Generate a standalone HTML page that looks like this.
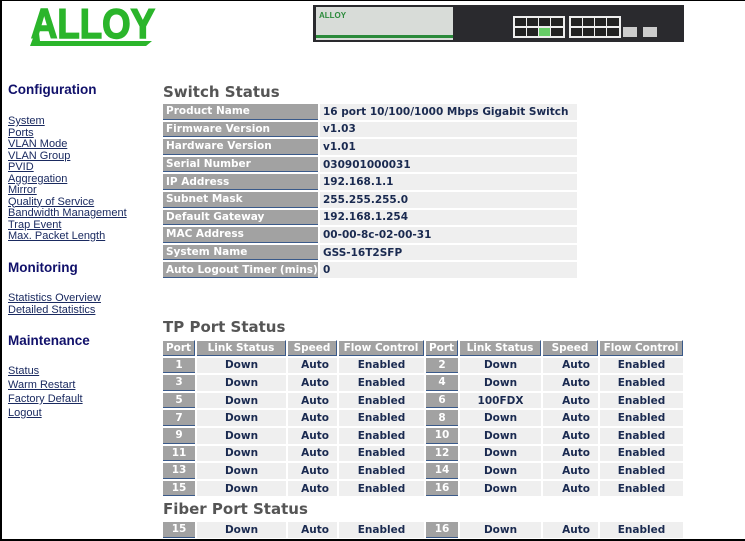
<!DOCTYPE html>
<html><head><meta charset="utf-8"><style>
body{margin:0;width:745px;height:541px;overflow:hidden;background:#fff;font-family:"DejaVu Sans",Verdana,sans-serif;}
.frame{position:absolute;left:0;top:0;width:743px;height:538px;border:1px solid #000;border-width:1px 1px 2px 2px;}
.nav{position:absolute;left:8px;font-family:"Liberation Sans",Arial,sans-serif;}
.nav h3{margin:0;font-size:13.5px;color:#10106a;font-weight:bold;position:absolute;white-space:nowrap}
.nav a{position:absolute;font-size:11px;color:#1a2a60;text-decoration:underline;white-space:nowrap;line-height:11.5px}
.ttl{position:absolute;left:163px;font-size:15px;font-weight:bold;color:#555;white-space:nowrap}
table{position:absolute;border-collapse:separate;border-spacing:2px;font-size:10.5px;}
td{padding:0 0 0 3px;height:15.6px;white-space:nowrap;color:#1a2a50;font-weight:bold;background:#efefef;}
td.l{background:#a2a2a2;color:#fff;border-bottom:1px solid #3a5a8a;height:14.6px}
.tp{table-layout:fixed;width:524px}
.tp td{text-align:center;padding:0;overflow:hidden}
.tp td.h{background:#a2a2a2;color:#fff;border-bottom:1px solid #3a5a8a;border-right:1px solid #3a5a8a;height:13.6px;border-top:1px solid #fff;font-weight:bold}
.tp td.p{background:#a2a2a2;color:#fff;border-bottom:1px solid #3a5a8a;height:14.6px;font-weight:bold}
.tp td.r{text-align:right;padding-right:8px}
</style></head><body>
<div class="frame"></div>
<svg style="position:absolute;left:28px;top:3px" width="132" height="46">
<polygon points="2,43 10,22 12,38 124,38 118,43" fill="#2bb52b"/>
<text x="3" y="35" font-family="Liberation Sans,Arial" font-weight="bold" font-size="42" fill="#2bb52b" stroke="#2bb52b" stroke-width="1.5" textLength="124" lengthAdjust="spacingAndGlyphs">ALLOY</text>
</svg>
<svg style="position:absolute;left:313px;top:5px" width="371" height="37">
<rect width="371" height="37" fill="#2a2a2e"/>
<rect x="3" y="2" width="137" height="33" fill="#d8dcd8"/>
<rect x="3" y="30" width="137" height="3" fill="#2a8a3a"/>
<text x="6" y="13" font-size="8" font-weight="bold" fill="#2a8a3a" font-family="Liberation Sans">ALLOY</text>
<rect x="200" y="11" width="52" height="22" fill="#eee"/>
<rect x="256" y="11" width="52" height="22" fill="#eee"/>
<g fill="#222"><rect x="202" y="13" width="11" height="8"/><rect x="214" y="13" width="11" height="8"/><rect x="226" y="13" width="11" height="8"/><rect x="238" y="13" width="12" height="8"/>
<rect x="202" y="23" width="11" height="8"/><rect x="214" y="23" width="11" height="8"/><rect x="226" y="23" width="11" height="8" fill="#6c6"/><rect x="238" y="23" width="12" height="8"/>
<rect x="258" y="13" width="11" height="8"/><rect x="270" y="13" width="11" height="8"/><rect x="282" y="13" width="11" height="8"/><rect x="294" y="13" width="12" height="8"/>
<rect x="258" y="23" width="11" height="8"/><rect x="270" y="23" width="11" height="8"/><rect x="282" y="23" width="11" height="8"/><rect x="294" y="23" width="12" height="8"/></g>
<rect x="310" y="22" width="14" height="10" fill="#ccc"/><rect x="330" y="22" width="14" height="10" fill="#ccc"/>
</svg>
<div class="nav">
<h3 style="top:82px">Configuration</h3>
<a style="top:116px">System</a><a style="top:127.5px">Ports</a><a style="top:139px">VLAN Mode</a><a style="top:150.5px">VLAN Group</a><a style="top:162px">PVID</a><a style="top:173.5px">Aggregation</a><a style="top:185px">Mirror</a><a style="top:196.5px">Quality of Service</a><a style="top:208px">Bandwidth Management</a><a style="top:219.5px">Trap Event</a><a style="top:231px">Max. Packet Length</a>
<h3 style="top:260px">Monitoring</h3>
<a style="top:293px">Statistics Overview</a><a style="top:304.5px">Detailed Statistics</a>
<h3 style="top:333px">Maintenance</h3>
<a style="top:366px">Status</a><a style="top:380px">Warm Restart</a><a style="top:394px">Factory Default</a><a style="top:408px">Logout</a>
</div>
<div class="ttl" style="top:83px">Switch Status</div>
<table style="left:161px;top:102px">
<tr><td class="l" style="width:152px">Product Name</td><td style="width:254px">16 port 10/100/1000 Mbps Gigabit Switch</td></tr>
<tr><td class="l">Firmware Version</td><td>v1.03</td></tr>
<tr><td class="l">Hardware Version</td><td>v1.01</td></tr>
<tr><td class="l">Serial Number</td><td>030901000031</td></tr>
<tr><td class="l">IP Address</td><td>192.168.1.1</td></tr>
<tr><td class="l">Subnet Mask</td><td>255.255.255.0</td></tr>
<tr><td class="l">Default Gateway</td><td>192.168.1.254</td></tr>
<tr><td class="l">MAC Address</td><td>00-00-8c-02-00-31</td></tr>
<tr><td class="l">System Name</td><td>GSS-16T2SFP</td></tr>
<tr><td class="l">Auto Logout Timer (mins)</td><td>0</td></tr>
</table>
<div class="ttl" style="top:318px">TP Port Status</div>
<table class="tp" style="left:161px;top:338px">
<colgroup><col style="width:32px"><col style="width:89px"><col style="width:49px"><col style="width:85px"><col style="width:32px"><col style="width:81px"><col style="width:55px"><col style="width:83px"></colgroup>
<tr><td class="h">Port</td><td class="h">Link Status</td><td class="h">Speed</td><td class="h">Flow Control</td><td class="h">Port</td><td class="h">Link Status</td><td class="h">Speed</td><td class="h">Flow Control</td></tr>
<tr><td class="p">1</td><td>Down</td><td class="r">Auto</td><td>Enabled</td><td class="p">2</td><td>Down</td><td class="r">Auto</td><td>Enabled</td></tr>
<tr><td class="p">3</td><td>Down</td><td class="r">Auto</td><td>Enabled</td><td class="p">4</td><td>Down</td><td class="r">Auto</td><td>Enabled</td></tr>
<tr><td class="p">5</td><td>Down</td><td class="r">Auto</td><td>Enabled</td><td class="p">6</td><td>100FDX</td><td class="r">Auto</td><td>Enabled</td></tr>
<tr><td class="p">7</td><td>Down</td><td class="r">Auto</td><td>Enabled</td><td class="p">8</td><td>Down</td><td class="r">Auto</td><td>Enabled</td></tr>
<tr><td class="p">9</td><td>Down</td><td class="r">Auto</td><td>Enabled</td><td class="p">10</td><td>Down</td><td class="r">Auto</td><td>Enabled</td></tr>
<tr><td class="p">11</td><td>Down</td><td class="r">Auto</td><td>Enabled</td><td class="p">12</td><td>Down</td><td class="r">Auto</td><td>Enabled</td></tr>
<tr><td class="p">13</td><td>Down</td><td class="r">Auto</td><td>Enabled</td><td class="p">14</td><td>Down</td><td class="r">Auto</td><td>Enabled</td></tr>
<tr><td class="p">15</td><td>Down</td><td class="r">Auto</td><td>Enabled</td><td class="p">16</td><td>Down</td><td class="r">Auto</td><td>Enabled</td></tr>
</table>
<div class="ttl" style="top:500px">Fiber Port Status</div>
<table class="tp" style="left:161px;top:520px">
<colgroup><col style="width:32px"><col style="width:89px"><col style="width:49px"><col style="width:85px"><col style="width:32px"><col style="width:81px"><col style="width:55px"><col style="width:83px"></colgroup>
<tr><td class="p">15</td><td>Down</td><td class="r">Auto</td><td>Enabled</td><td class="p">16</td><td>Down</td><td class="r">Auto</td><td>Enabled</td></tr>
</table>
</body></html>
